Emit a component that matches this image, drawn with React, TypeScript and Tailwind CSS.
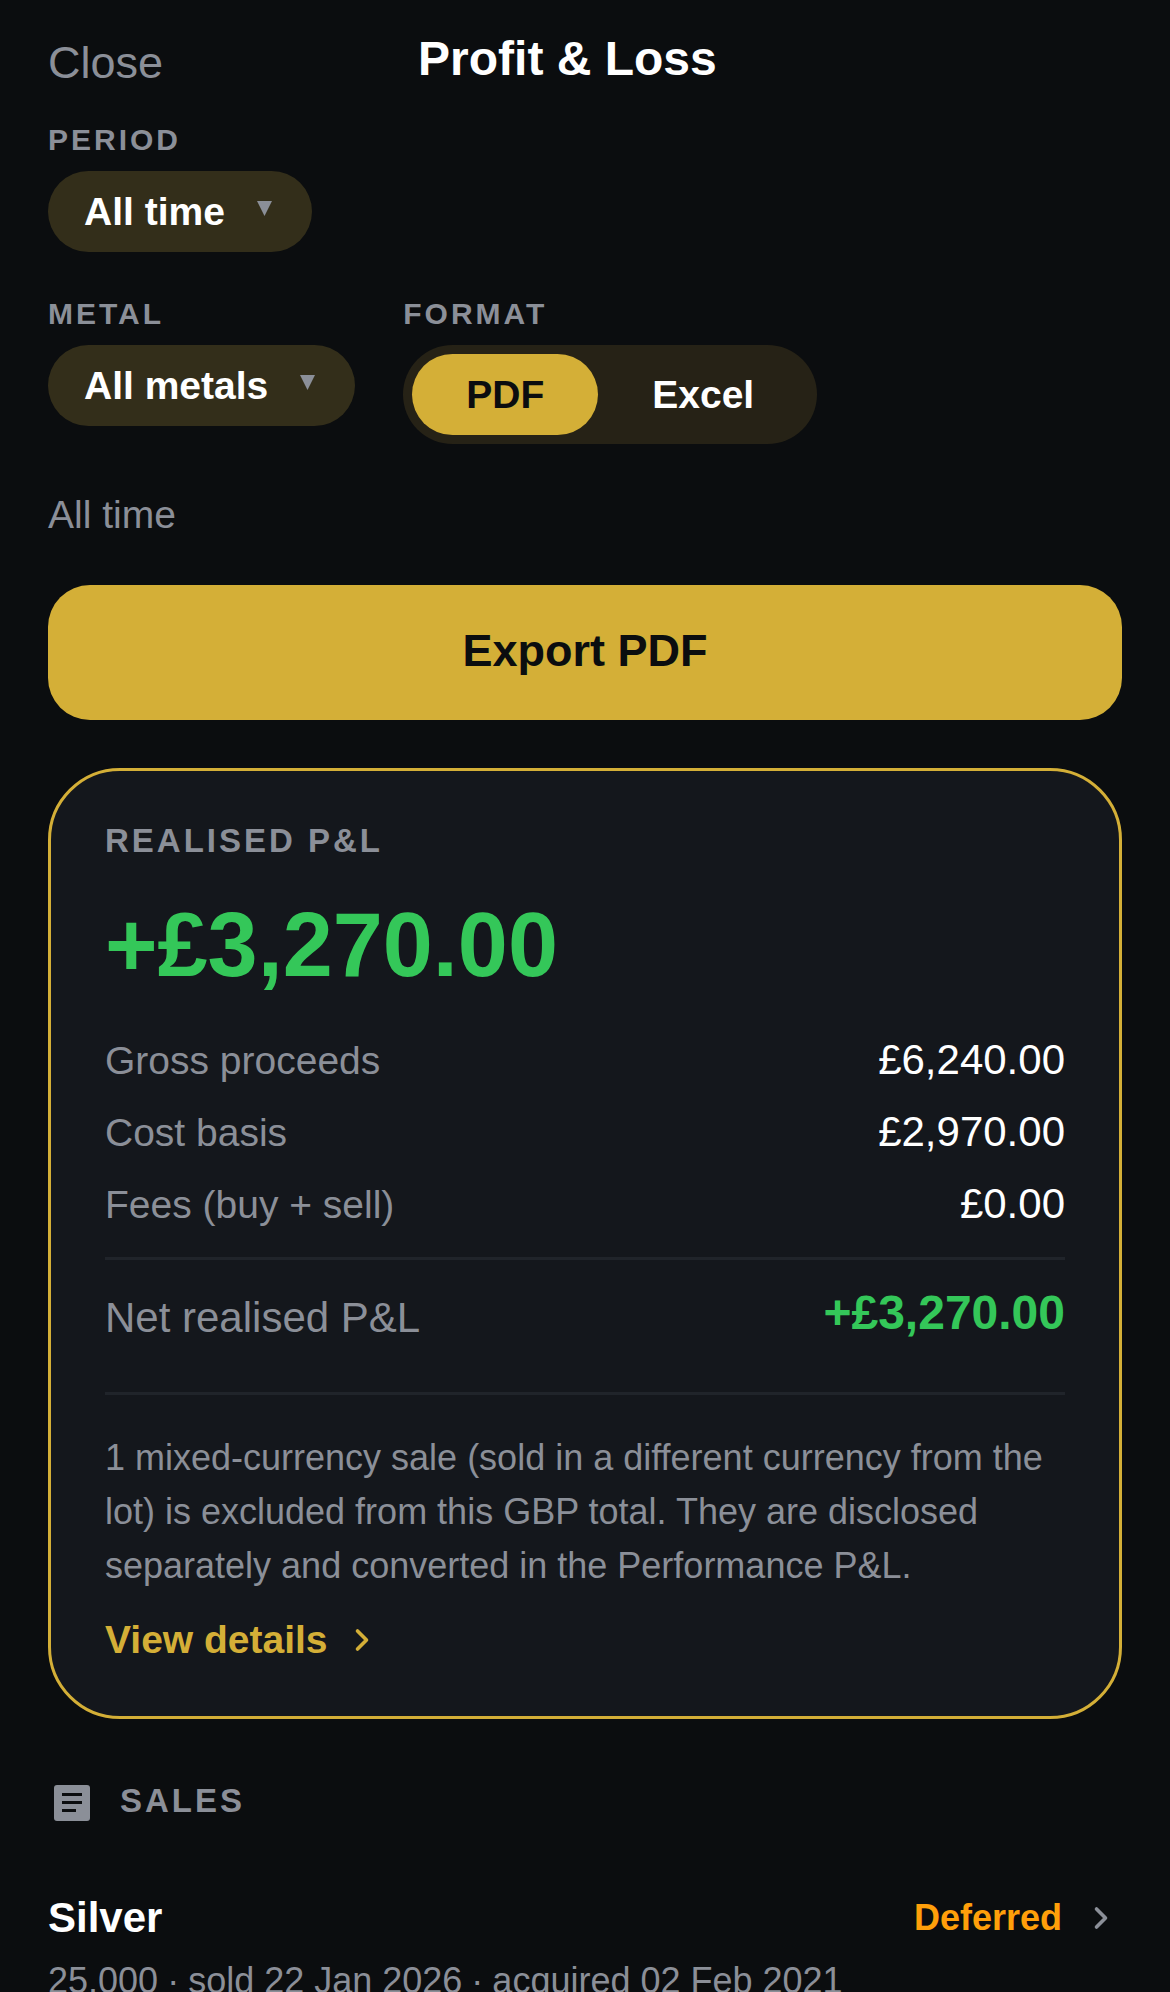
import React from "react";
import {ChevronRight} from "lucide-react";

const Row = ({label, value}: {label: string; value: string}) => (
  <div className="flex items-center justify-between h-[72px]">
    <span className="text-[39px] pt-[2px] text-[#8b8f98]">{label}</span>
    <span className="text-[42px] pb-[2px] text-white">{value}</span>
  </div>
);

const Caret = () => (
  <svg width="15" height="15" viewBox="0 0 15 15" className="ml-[32px] mb-[8px]">
    <path d="M0 0H15L7.5 15Z" fill="#8b8f98" />
  </svg>
);

const Label = ({children}: {children: React.ReactNode}) => (
  <div className="text-[30px] leading-[36px] font-bold tracking-[3px] text-[#8b8f98]">{children}</div>
);

const Dot = () => <span className="-mx-[1px]">·</span>;

export default function App() {
  return (
    <div
      className="w-[1170px] h-[1992px] overflow-hidden bg-[#0b0d0f] px-12"
      style={{fontFamily: '"Liberation Sans", Arial, sans-serif'}}
    >
      {/* Header */}
      <div className="flex items-start h-[120px]">
        <div className="text-[45px] leading-[54px] text-[#8b8f98] mt-[36px]">Close</div>
        <div className="text-[48px] leading-[58px] font-bold text-white ml-[255px] mt-[30px]">Profit &amp; Loss</div>
      </div>

      {/* Filters */}
      <div className="mt-[2px]">
        <Label>PERIOD</Label>
        <div className="mt-[13px] inline-flex items-center h-[81px] rounded-full bg-[#332e1a] pl-9 pr-10 pt-[2px]">
          <span className="text-[39px] font-bold text-white">All time</span>
          <Caret />
        </div>
      </div>

      <div className="flex gap-12 mt-[44px]">
        <div>
          <Label>METAL</Label>
          <div className="mt-[13px] inline-flex items-center h-[81px] rounded-full bg-[#332e1a] pl-9 pr-10 pt-[2px]">
            <span className="text-[39px] font-bold text-white">All metals</span>
            <Caret />
          </div>
        </div>
        <div>
          <Label>FORMAT</Label>
          <div className="mt-[13px] flex h-[99px] w-[414px] rounded-full bg-[#262216] p-[9px]">
            <div className="w-[186px] rounded-full bg-[#d4af37] flex items-center justify-center pt-[2px] text-[39px] font-bold text-[#0b0d0f]">PDF</div>
            <div className="flex-1 flex items-center justify-center pt-[2px] text-[39px] font-bold text-white">Excel</div>
          </div>
        </div>
      </div>

      <div className="text-[39px] leading-[54px] text-[#8b8f98] mt-[44px]">All time</div>

      <div className="mt-[43px] h-[135px] rounded-[42px] bg-[#d4af37] flex items-center justify-center pb-[4px] text-[45px] font-bold text-[#0b0d0f]">
        Export PDF
      </div>

      {/* Realised card */}
      <div className="mt-[48px] h-[951px] rounded-[72px] border-[3px] border-[#d4af37] bg-[#14171c] px-[54px] pt-[50px]">
        <div className="text-[33px] leading-[40px] font-bold tracking-[3px] text-[#8b8f98]">REALISED P&amp;L</div>
        <div className="text-[90px] leading-[104px] font-bold text-[#34c759] mt-[32px]">+£3,270.00</div>
        <div className="mt-[27px]">
          <Row label="Gross proceeds" value="£6,240.00" />
          <Row label="Cost basis" value="£2,970.00" />
          <Row label="Fees (buy + sell)" value="£0.00" />
        </div>
        <div className="h-[3px] bg-[#20242a] mt-[17px]" />
        <div className="flex items-start justify-between h-[132px] pt-[23px]">
          <span className="text-[42px] leading-[70px] text-[#8b8f98]">Net realised P&amp;L</span>
          <span className="text-[48px] leading-[60px] font-bold text-[#34c759]">+£3,270.00</span>
        </div>
        <div className="h-[3px] bg-[#20242a]" />
        <p className="text-[36px] leading-[54px] text-[#8b8f98] mt-[36px]">
          1 mixed-currency sale (sold in a different currency from the lot) is excluded from this GBP total. They are disclosed separately and converted in the Performance P&amp;L.
        </p>
        <div className="flex items-center gap-4 mt-[20px]">
          <span className="text-[39px] leading-[54px] font-bold text-[#d4af37]">View details</span>
          <ChevronRight size={36} strokeWidth={2.4} color="#d4af37" />
        </div>
      </div>

      {/* Sales */}
      <div className="flex items-center mt-[57px]">
        <svg width="36" height="36" viewBox="0 0 36 36" className="ml-[6px]">
          <rect width="36" height="36" rx="3" fill="#8b8f98" />
          <path d="M8 9.5H28M8 17.5H28M8 25.5H22" stroke="#0b0d0f" strokeWidth="3" />
        </svg>
        <span className="ml-[30px] mb-[4px] text-[33px] font-bold tracking-[3px] text-[#8b8f98]">SALES</span>
      </div>

      <div className="flex items-center justify-between mt-[61px]">
        <span className="text-[42px] leading-[54px] font-bold text-white">Silver</span>
        <div className="flex items-center gap-[21px] mr-[3px]">
          <span className="text-[36px] font-bold text-[#ff9f0a]">Deferred</span>
          <ChevronRight size={36} strokeWidth={2.4} color="#8b8f98" />
        </div>
      </div>
      <div className="text-[36px] leading-[54px] text-[#8b8f98] mt-[9px]">
        25.000 <Dot /> sold 22 Jan 2026 <Dot /> acquired 02 Feb 2021
      </div>
    </div>
  );
}
